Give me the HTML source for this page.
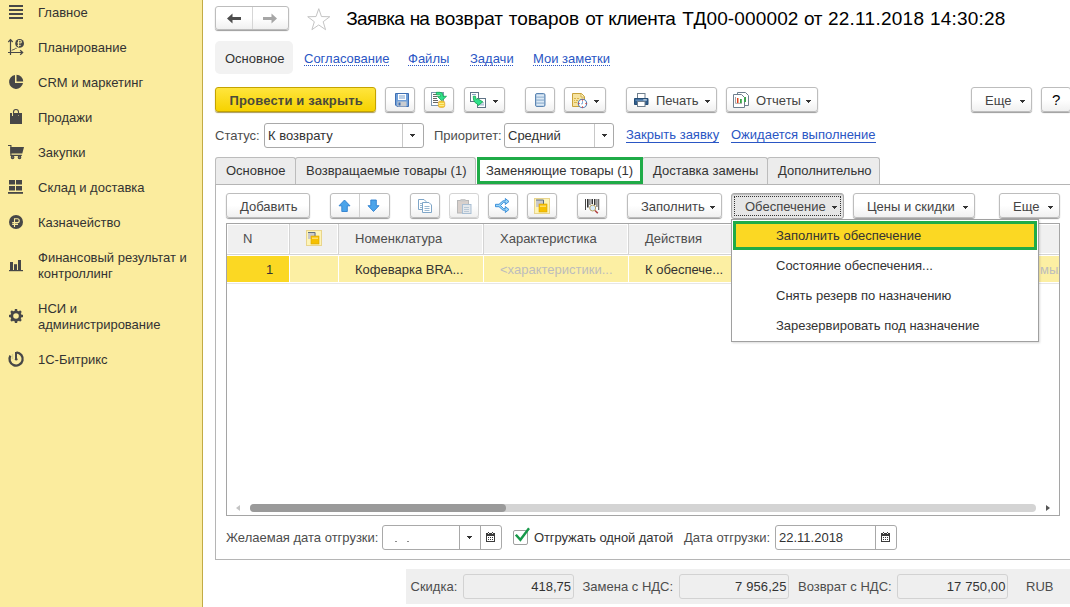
<!DOCTYPE html>
<html><head><meta charset="utf-8">
<style>
*{box-sizing:border-box;margin:0;padding:0}
html,body{width:1070px;height:607px;overflow:hidden;background:#fff;font-family:"Liberation Sans",sans-serif;font-size:13px;color:#333}
.a{position:absolute}
.t{position:absolute;white-space:nowrap;line-height:15px}
#side{left:0;top:0;width:203px;height:607px;background:#fbec9e;border-right:1px solid #c2ab45}
#side .t{color:#333;left:38px}
.ic{position:absolute}
.btn{position:absolute;border:1px solid #bdbdbd;border-radius:3px;background:linear-gradient(#fff 0%,#fff 50%,#f0f0f0 100%);box-shadow:0 1px 1px #9c9c9c}
.btn .t{color:#444}
.dd{position:absolute;width:0;height:0;border-left:3.5px solid transparent;border-right:3.5px solid transparent;border-top:4px solid #555}
.lnk{color:#2a56c4;text-decoration:none}
.lnkd,.lnku{position:relative;display:inline-block;line-height:15px}
.lnkd::after{content:'';position:absolute;left:0;right:0;bottom:0;height:1px;background:repeating-linear-gradient(90deg,#2a56c4 0 1px,transparent 1px 2px)}
.lnku::after{content:'';position:absolute;left:0;right:0;bottom:-1px;height:1px;background:#2a56c4}
.inp{position:absolute;border:1px solid #a9a9a9;border-radius:3px;background:#fff}
.tab{position:absolute;top:157px;height:27px;background:#ececec;border:1px solid #bcbcbc;border-bottom:none;border-radius:3px 3px 0 0}
.lbl{color:#4d4d4d}
.arr{position:absolute;width:5px;height:3px;background:linear-gradient(#333,#333) 0 0/5px 1px no-repeat,linear-gradient(#333,#333) 1px 1px/3px 1px no-repeat,linear-gradient(#333,#333) 2px 2px/1px 1px no-repeat}
.tw{font-size:19px;line-height:22px;color:#000}
</style></head><body>
<!-- Sidebar -->
<div id="side" class="a">
  <div class="t" style="top:5px">Главное</div>
  <div class="t" style="top:40px">Планирование</div>
  <div class="t" style="top:75px">CRM и маркетинг</div>
  <div class="t" style="top:110px">Продажи</div>
  <div class="t" style="top:145px">Закупки</div>
  <div class="t" style="top:180px">Склад и доставка</div>
  <div class="t" style="top:215px">Казначейство</div>
  <div class="t" style="top:250px;line-height:16px">Финансовый результат и<br>контроллинг</div>
  <div class="t" style="top:301px;line-height:16px">НСИ и<br>администрирование</div>
  <div class="t" style="top:352px">1С-Битрикс</div>
  <svg class="ic" style="left:0;top:0" width="30" height="380" viewBox="0 0 30 380">
    <g fill="#474747">
      <!-- hamburger -->
      <rect x="9" y="5" width="14" height="2"/><rect x="9" y="9" width="14" height="2"/><rect x="9" y="13" width="14" height="2"/><rect x="9" y="17" width="14" height="2"/>
      <!-- planning -->
      <path d="M10.5 39.5 V55 M8 52.5 H23" stroke="#474747" stroke-width="1.2" fill="none"/>
      <path d="M8.3 42 L10.5 39.6 L12.7 42 M20.2 50.3 L22.6 52.5 L20.2 54.7" stroke="#474747" stroke-width="1.3" fill="none"/>
      <path d="M11.6 50.6 L13 49.6 H14 L15.4 48.4 H16.6" stroke="#474747" stroke-width="0.9" fill="none"/>
      <circle cx="19.6" cy="43.4" r="4.4"/>
      <path d="M18.5 40.2 V46.8 M18.5 40.7 H21.2 V42.9 H17.2 M17.2 45.3 H20.7" stroke="#fbec9e" stroke-width="1" fill="none"/>
      <!-- pie -->
      <path d="M15 75 A7 7 0 1 0 23 83 L15 83 Z"/>
      <path d="M16.5 74.8 A6.8 6.8 0 0 1 23.2 81.5 L16.5 81.5 Z"/>
      <!-- bag -->
      <path d="M10 113 H12 V116 H13 V113 H18 V116 H19 V113 H22 V124 H10 Z"/>
      <path d="M13.5 115.5 V112 A2.5 2.5 0 0 1 18.5 112 V115.5" stroke="#474747" stroke-width="1.1" fill="none"/>
      <!-- cart -->
      <path d="M8 145.5 H10.9 V155.4 H21.8" stroke="#474747" stroke-width="1.15" fill="none"/>
      <path d="M10.3 147 H24 L22.3 153.6 H10.3 Z"/>
      <circle cx="12.6" cy="157.3" r="1.3" stroke="#474747" stroke-width="1.1" fill="#7a7560"/><circle cx="19.5" cy="157.3" r="1.3" stroke="#474747" stroke-width="1.1" fill="#7a7560"/>
      <!-- grid -->
      <rect x="9" y="180" width="6" height="4.5"/><rect x="16" y="180" width="6" height="4.5"/>
      <rect x="9" y="186" width="6" height="4.5"/><rect x="16" y="186" width="6" height="4.5"/>
      <rect x="8" y="192" width="15" height="1.8"/>
      <!-- ruble -->
      <circle cx="16" cy="222" r="7"/>
      <path d="M14.5 218.2 V227 M14.5 218.7 H17.3 A1.95 1.95 0 0 1 17.3 222.6 H12.2 M12.2 224.4 H18" stroke="#fbec9e" stroke-width="1.1" fill="none"/>
      <!-- bars -->
      <rect x="10" y="262" width="3" height="8.5"/><rect x="14" y="264.2" width="3" height="6.3"/><rect x="18" y="260" width="3" height="10.5"/>
      <rect x="9" y="270" width="14" height="1.2"/>
      <!-- gear -->
      <g transform="translate(16,316)">
        <circle r="5.6"/>
        <rect x="-1.2" y="-7" width="2.4" height="14"/><rect x="-7" y="-1.2" width="14" height="2.4"/>
        <rect x="-1.2" y="-7" width="2.4" height="14" transform="rotate(45)"/><rect x="-1.2" y="-7" width="2.4" height="14" transform="rotate(-45)"/>
        <circle r="2.8" fill="#fbec9e"/>
      </g>
      <!-- bitrix -->
      <path d="M16.5 352.4 A6.6 6.6 0 1 1 10.4 355.6" stroke="#474747" stroke-width="2.3" fill="none"/>
      <rect x="15" y="352" width="2" height="7.5"/>
      <circle cx="16.2" cy="359.2" r="1.3"/>
      <path d="M12.5 354 V359" stroke="#d8d28a" stroke-width="1.5"/>
    </g>
  </svg>
</div>

<!-- Header -->
<div class="btn" style="left:215px;top:6px;width:74px;height:24px"></div>
<div class="a" style="left:252px;top:7px;width:1px;height:22px;background:#d6d6d6"></div>
<svg class="a" style="left:215px;top:6px" width="74" height="24">
  <path d="M12 12.5 L17.5 7.5 V11 H26 V14 H17.5 V17.5 Z" fill="#4d4d4d"/>
  <path d="M62 12.5 L56.5 7.5 V11 H48 V14 H56.5 V17.5 Z" fill="#a6a6a6"/>
</svg>
<svg class="a" style="left:300px;top:0px" width="40" height="40"><path d="M18.75 8.70 L21.48 16.55 L29.78 16.72 L23.16 21.73 L25.57 29.68 L18.75 24.94 L11.93 29.68 L14.34 21.73 L7.72 16.72 L16.02 16.55 Z" fill="none" stroke="#c4c4c4" stroke-width="1" stroke-linejoin="miter"/></svg>
<div class="t tw" style="left:346.2px;letter-spacing:-0.6px;top:8px">Заявка</div><div class="t tw" style="left:409.8px;letter-spacing:-1px;top:8px">на</div><div class="t tw" style="left:434.8px;letter-spacing:-0.05px;top:8px">возврат</div><div class="t tw" style="left:508.8px;letter-spacing:-0.07px;top:8px">товаров</div><div class="t tw" style="left:585.2px;letter-spacing:-0.4px;top:8px">от</div><div class="t tw" style="left:608.2px;letter-spacing:-0.45px;top:8px">клиента</div><div class="t tw" style="left:682.3px;letter-spacing:0.14px;top:8px">ТД00-000002</div><div class="t tw" style="left:804px;letter-spacing:-0.3px;top:8px">от</div><div class="t tw" style="left:827.9px;letter-spacing:0.27px;top:8px">22.11.2018</div><div class="t tw" style="left:930.1px;letter-spacing:0.17px;top:8px">14:30:28</div>

<div class="a" style="left:215px;top:41px;width:78px;height:33px;background:#f2f2f2;border-radius:5px"></div>
<div class="t" style="left:225px;top:51px;color:#333">Основное</div>
<div class="t lnk" style="left:304px;top:51px"><span class="lnkd">Согласование</span></div>
<div class="t lnk" style="left:408px;top:51px"><span class="lnkd">Файлы</span></div>
<div class="t lnk" style="left:470px;top:51px"><span class="lnkd">Задачи</span></div>
<div class="t lnk" style="left:533px;top:51px"><span class="lnkd">Мои заметки</span></div>


<!-- main toolbar -->
<div class="a" style="left:215px;top:87px;width:161px;height:25px;border:1px solid #c4a300;border-radius:3px;background:linear-gradient(#ffe53d,#f6d200);box-shadow:0 1px 1px #a89a5a"></div>
<div class="t" style="left:229.5px;top:93px;font-weight:bold;color:#4a4a3a;letter-spacing:0.17px">Провести и закрыть</div>
<div class="btn" style="left:385px;top:87px;width:30px;height:25px"></div>
<div class="btn" style="left:424px;top:87px;width:30px;height:25px"></div>
<div class="btn" style="left:464px;top:87px;width:41px;height:25px"></div>
<div class="btn" style="left:525px;top:87px;width:30px;height:25px"></div>
<div class="btn" style="left:564px;top:87px;width:42px;height:25px"></div>
<div class="btn" style="left:626px;top:87px;width:91px;height:25px"></div>
<div class="t" style="left:656px;top:93px;color:#444">Печать</div>
<div class="btn" style="left:726px;top:87px;width:92px;height:25px"></div>
<div class="t" style="left:756px;top:93px;color:#444">Отчеты</div>
<div class="btn" style="left:971px;top:87px;width:61px;height:25px"></div>
<div class="t" style="left:985px;top:93px;color:#444">Еще</div>
<div class="btn" style="left:1041px;top:87px;width:30px;height:25px"></div>
<div class="t" style="left:1052px;top:92px;color:#000;font-size:15px">?</div>
<svg class="a" style="left:380px;top:85px" width="460" height="30" viewBox="380 85 460 30">
  <!-- floppy -->
  <path d="M395.5 93.5 H408.5 V106.5 H397 L395.5 105 Z" fill="#6f9fd9" stroke="#3f6fb2" stroke-width="1"/>
  <rect x="398" y="94" width="8" height="6" fill="#fff"/>
  <rect x="399" y="95.5" width="6" height="1" fill="#7aa0cc"/><rect x="399" y="97.5" width="6" height="1" fill="#7aa0cc"/>
  <rect x="397.5" y="101.5" width="9" height="5" fill="#c9ccd0"/>
  <rect x="398.5" y="102.5" width="2" height="3" fill="#3f6fb2"/>
  <!-- doc + arrow + coins -->
  <rect x="431.5" y="92.5" width="12" height="13" fill="#fff" stroke="#7d97b0" stroke-width="1"/>
  <g fill="#666"><rect x="433" y="94" width="4" height="1"/><rect x="433" y="96" width="4" height="1"/><rect x="433" y="98" width="4" height="1"/><rect x="433" y="100" width="5" height="1"/><rect x="433" y="102" width="5" height="1"/></g>
  <path d="M436.3 92.3 H440 Q443 92.3 443 95.5 V96.3 H446.5 L441.8 100.8 L437.3 96.3 H440.5 V95.7 Q440.5 94.8 439.5 94.8 H436.3 Z" fill="#2fe08a" stroke="#17a34f" stroke-width="0.8"/>
  <rect x="438.3" y="101" width="6.5" height="6.5" rx="2" fill="#f3cf3a" stroke="#e0a030" stroke-width="0.6"/>
  <rect x="439" y="103" width="5" height="0.8" fill="#fff3a0"/><rect x="439" y="105" width="5" height="0.8" fill="#fff3a0"/>
  <!-- docs + green -->
  <rect x="470.5" y="92.5" width="8" height="9" fill="#fff" stroke="#5f7386" stroke-width="1"/>
  <rect x="477.5" y="98.5" width="8" height="9" fill="#fff" stroke="#5f7386" stroke-width="1"/>
  <rect x="472" y="94" width="4" height="0.8" fill="#6c8fb5"/>
  <g fill="#6c8fb5"><rect x="479" y="102.5" width="5" height="0.8"/><rect x="479" y="104.5" width="5" height="0.8"/></g>
  <path d="M473.2 96.3 L475.5 96.2 L476 99.5 L477.5 98.6 L482.8 101.8 L478 105.7 L477.5 104.2 L475 102.5 Q473 100.5 473.2 96.3 Z" fill="#2fe08a" stroke="#17a34f" stroke-width="0.8"/>
  
  <!-- list -->
  <rect x="535.5" y="93.5" width="9.5" height="13" rx="1.5" fill="#9db9d6" stroke="#5d86b3" stroke-width="1"/>
  <g fill="#dbe9f5"><rect x="536.5" y="94.5" width="7.5" height="2"/><rect x="536.5" y="97.8" width="7.5" height="1.6"/><rect x="536.5" y="100.8" width="7.5" height="1.6"/><rect x="536.5" y="103.8" width="7.5" height="1.8"/></g>
  <!-- doc clock -->
  <path d="M572.5 93.5 H581.5 L584.5 96.5 V106.5 H572.5 Z" fill="#f6e3a0" stroke="#c8a23a" stroke-width="1"/>
  <path d="M581 93.8 V97 H584.3" fill="#fff8d0" stroke="#c8a23a" stroke-width="0.8"/>
  <g fill="#d9b54a"><rect x="574" y="98" width="2" height="1"/><rect x="577" y="98" width="2" height="1"/><rect x="574" y="100" width="1" height="1"/><rect x="576" y="100" width="2" height="1"/><rect x="574" y="102" width="3" height="1"/></g>
  <circle cx="582.5" cy="103.5" r="4.2" fill="#fff" stroke="#4b7db5" stroke-width="1.1"/>
  <path d="M582.5 101 V103.8 H581" stroke="#6a9ad0" stroke-width="0.8" fill="none"/>
  <g fill="#e0302a"><circle cx="582.5" cy="100" r="0.7"/><circle cx="582.5" cy="107" r="0.7"/><circle cx="579" cy="103.5" r="0.7"/><circle cx="586" cy="103.5" r="0.7"/></g>
  
  <!-- printer -->
  <rect x="637.5" y="93.5" width="7.5" height="5" fill="#fff" stroke="#6f7f8e" stroke-width="1"/>
  <path d="M634.5 98.5 H648 V104.5 H634.5 Z" fill="#2f5d8c" stroke="#264d75" stroke-width="1" stroke-linejoin="round"/>
  <rect x="635.5" y="99.5" width="11.5" height="1.5" fill="#5d88b5"/>
  <rect x="643.5" y="99.2" width="1.2" height="1.2" fill="#fff"/><rect x="645.3" y="99.2" width="1.2" height="1.2" fill="#fff"/>
  <rect x="637.5" y="101.5" width="7.5" height="5" fill="#fff" stroke="#6f7f8e" stroke-width="1"/>
  
  <!-- reports -->
  <path d="M737.5 92.5 H745.5 L748.5 95.5 V105.5 H737.5 Z" fill="#fff" stroke="#6f7f8e" stroke-width="1"/>
  <path d="M733.5 94.5 H741.5 L744.5 97.5 V107.5 H733.5 Z" fill="#fff" stroke="#6f7f8e" stroke-width="1"/>
  <rect x="744.2" y="97" width="1.8" height="5" fill="#3aa54a"/>
  <path d="M735.5 97 V103.3 H742" stroke="#666" stroke-width="0.6" fill="none"/>
  <rect x="737" y="98" width="1.4" height="5" fill="#e23a22"/><rect x="738.4" y="98" width="0.6" height="5" fill="#f5b070"/>
  <rect x="740" y="99" width="1.8" height="4" fill="#3aa54a"/>
  
  
</svg>


<!-- status row -->
<div class="t lbl" style="left:215px;top:128px">Статус:</div>
<div class="inp" style="left:264px;top:123px;width:160px;height:25px"></div>
<div class="a" style="left:402px;top:124px;width:1px;height:23px;background:#c8c8c8"></div>
<div class="t" style="left:268px;top:128px">К возврату</div>
<div class="t lbl" style="left:434px;top:128px">Приоритет:</div>
<div class="inp" style="left:504px;top:123px;width:110px;height:25px"></div>
<div class="a" style="left:594px;top:124px;width:1px;height:23px;background:#c8c8c8"></div>
<div class="t" style="left:508px;top:128px">Средний</div>

<div class="t lnk" style="left:626px;top:127px"><span class="lnku">Закрыть заявку</span></div>
<div class="t lnk" style="left:731px;top:127px"><span class="lnku">Ожидается выполнение</span></div>

<!-- tabs -->
<div class="a" style="left:215px;top:184px;width:855px;height:376px;border:1px solid #b5b5b5;border-right:none"></div>
<div class="tab" style="left:215px;width:81px"></div>
<div class="t" style="left:226px;top:163px">Основное</div>
<div class="tab" style="left:295px;width:181px"></div>
<div class="t" style="left:306px;top:163px">Возвращаемые товары (1)</div>
<div class="tab" style="left:642px;width:126px"></div>
<div class="t" style="left:653px;top:163px">Доставка замены</div>
<div class="tab" style="left:767px;width:113px"></div>
<div class="t" style="left:778px;top:163px">Дополнительно</div>
<div class="a" style="left:477px;top:157px;width:166px;height:27px;background:#fff;border:3px solid #1fab47"></div>
<div class="t" style="left:486px;top:163px">Заменяющие товары (1)</div>




<!-- table toolbar -->
<div class="btn" style="left:226px;top:193px;width:84px;height:25px"></div>
<div class="t" style="left:240px;top:199px;color:#444">Добавить</div>
<div class="btn" style="left:330px;top:193px;width:60px;height:25px"></div>
<div class="a" style="left:359px;top:194px;width:1px;height:23px;background:#d0d0d0"></div>
<div class="btn" style="left:410px;top:193px;width:30px;height:25px"></div>
<div class="btn" style="left:449px;top:193px;width:30px;height:25px;border-color:#d4d4d4;box-shadow:0 1px 0 #c8c8c8"></div>
<div class="btn" style="left:488px;top:193px;width:30px;height:25px"></div>
<div class="btn" style="left:527px;top:193px;width:30px;height:25px"></div>
<div class="btn" style="left:577px;top:193px;width:30px;height:25px"></div>
<div class="btn" style="left:627px;top:193px;width:95px;height:25px"></div>
<div class="t" style="left:641px;top:199px;color:#444">Заполнить</div>
<div class="a" style="left:731px;top:193px;width:113px;height:26px;border:1px solid #a8a8a8;border-radius:3px;background:#e6e6e6;box-shadow:inset 0 1px 1px #bbb"></div>
<div class="a" style="left:734px;top:196px;width:107px;height:20px;border:1px dotted #333"></div>
<div class="t" style="left:745px;top:199px;color:#444">Обеспечение</div>
<div class="btn" style="left:853px;top:193px;width:122px;height:25px"></div>
<div class="t" style="left:867px;top:199px;color:#444">Цены и скидки</div>
<div class="btn" style="left:999px;top:193px;width:61px;height:25px"></div>
<div class="t" style="left:1013px;top:199px;color:#444">Еще</div>
<svg class="a" style="left:330px;top:190px" width="740" height="60" viewBox="330 190 740 60">
  <!-- up -->
  <path d="M344.5 200 L350 205.8 H347.3 V211.5 H341.8 V205.8 H339 Z" fill="#4ba4ea" stroke="#2d7fcf" stroke-width="0.9" stroke-linejoin="round"/>
  <!-- down -->
  <path d="M373.5 211.5 L379 205.7 H376.3 V200 H370.8 V205.7 H368 Z" fill="#4ba4ea" stroke="#2d7fcf" stroke-width="0.9" stroke-linejoin="round"/>
  <!-- copy -->
  <path d="M418.5 199.5 H424 L426 201.5 V209.5 H418.5 Z" fill="#fff" stroke="#7fa6c8" stroke-width="1"/>
  <path d="M422.5 202.5 H429 L431.5 205 V212.5 H422.5 Z" fill="#fff" stroke="#7fa6c8" stroke-width="1"/>
  <g fill="#8fb0cc"><rect x="420" y="203" width="2" height="0.9"/><rect x="420" y="205" width="2" height="0.9"/><rect x="420" y="207" width="2" height="0.9"/>
  <rect x="424.5" y="206" width="5" height="0.9"/><rect x="424.5" y="208" width="5" height="0.9"/><rect x="424.5" y="210" width="5" height="0.9"/></g>
  <!-- paste disabled -->
  <rect x="457.5" y="200.5" width="11" height="12.5" fill="#d8d0cc" stroke="#b8b8b8" stroke-width="1"/>
  <rect x="460.5" y="199" width="5" height="2.5" fill="#c8c8c8"/>
  <rect x="462.5" y="204.5" width="8.5" height="9" fill="#e4e8ec" stroke="#a9bfd4" stroke-width="1"/>
  <g fill="#b4c4d4"><rect x="464" y="207" width="5" height="0.9"/><rect x="464" y="209" width="5" height="0.9"/><rect x="464" y="211" width="5" height="0.9"/></g>
  <!-- split -->
  <path d="M495.5 204.3 H499 L503 200.8 H505.3 V198.5 L509 201.5 L505.3 204.5 V202.3 H503.6 L500.5 205.5 L503.6 208.6 H505.3 V206.5 L509 209.5 L505.3 212.5 V210.2 H503 L499 206.7 H495.5 Z" fill="#9ad6f7" stroke="#2c86d6" stroke-width="0.9" stroke-linejoin="round"/>
  <!-- yellow frame icon -->
  <rect x="534.5" y="198.5" width="15" height="15" fill="#fdf4b8" stroke="#e9d58c" stroke-width="1"/>
  <rect x="536" y="200" width="7.5" height="7" fill="#c9c9cc"/>
  <path d="M536 200 H543.5 V204" stroke="#5e6f80" stroke-width="1" fill="none"/>
  <rect x="539" y="204" width="8" height="8" fill="#f6c000" stroke="#d9a300" stroke-width="0.6"/>
  <rect x="540" y="205.5" width="6" height="1.5" fill="#ffdd66"/>
  <!-- barcode -->
  <g fill="#333"><rect x="585" y="199" width="0.9" height="11"/><rect x="587" y="199" width="1.6" height="8.5"/><rect x="589.5" y="199" width="0.9" height="6"/><rect x="591.5" y="199" width="1.5" height="5"/><rect x="594" y="199" width="1.5" height="6"/><rect x="596.5" y="199" width="0.9" height="8"/><rect x="598.3" y="199" width="0.9" height="11"/></g>
  <path d="M595 210.5 L597.8 213.3" stroke="#b04040" stroke-width="1.6"/>
  <circle cx="592.7" cy="208" r="3" fill="#d6eaf8" stroke="#b8a060" stroke-width="1"/>
  <!-- dropdown arrows -->
  
  
  
  
</svg>

<!-- table -->
<div class="a" style="left:226px;top:223px;width:834px;height:293px;border:1px solid #a5a5a5;background:#fff"></div>
<div class="a" style="left:228px;top:225px;width:60px;height:28px;background:#f0f0f0"></div>
<div class="a" style="left:290px;top:225px;width:47px;height:28px;background:#f0f0f0"></div>
<div class="a" style="left:339px;top:225px;width:143px;height:28px;background:#f0f0f0"></div>
<div class="a" style="left:484px;top:225px;width:143px;height:28px;background:#f0f0f0"></div>
<div class="a" style="left:629px;top:225px;width:430px;height:28px;background:#f0f0f0"></div>
<div class="a" style="left:227px;top:254px;width:832px;height:1px;background:#d4d4d4"></div>
<div class="a" style="left:289px;top:224px;width:1px;height:31px;background:#d4d4d4"></div>
<div class="a" style="left:338px;top:224px;width:1px;height:31px;background:#d4d4d4"></div>
<div class="a" style="left:483px;top:224px;width:1px;height:31px;background:#d4d4d4"></div>
<div class="a" style="left:628px;top:224px;width:1px;height:31px;background:#d4d4d4"></div>
<div class="t" style="left:243px;top:231px;color:#4d4d4d">N</div>
<div class="t" style="left:355px;top:231px;color:#4d4d4d">Номенклатура</div>
<div class="t" style="left:500px;top:231px;color:#4d4d4d">Характеристика</div>
<div class="t" style="left:645px;top:231px;color:#4d4d4d">Действия</div>
<svg class="a" style="left:304px;top:228px" width="20" height="20" viewBox="304 228 20 20">
  <g transform="translate(-228 32)">
  <rect x="534.5" y="198.5" width="15" height="15" fill="#fdf4b8" stroke="#e9d58c" stroke-width="1"/>
  <rect x="536" y="200" width="7.5" height="7" fill="#c9c9cc"/>
  <path d="M536 200.5 H543 V204" stroke="#5e6f80" stroke-width="1" fill="none"/>
  <rect x="539" y="204" width="8" height="8" fill="#f6c000" stroke="#d9a300" stroke-width="0.6"/>
  <rect x="540" y="205.5" width="6" height="1.5" fill="#ffdd66"/>
  </g>
</svg>
<div class="a" style="left:227px;top:256px;width:832px;height:26px;background:#fcefa3"></div>
<div class="a" style="left:227px;top:256px;width:62px;height:26px;background:#fbd823"></div>
<div class="a" style="left:289px;top:256px;width:1px;height:26px;background:#fff"></div>
<div class="a" style="left:338px;top:256px;width:1px;height:26px;background:#fff"></div>
<div class="a" style="left:483px;top:256px;width:1px;height:26px;background:#fff"></div>
<div class="a" style="left:628px;top:256px;width:1px;height:26px;background:#fff"></div>
<div class="a" style="left:227px;top:283px;width:832px;height:1px;background:#e6e6e6"></div>
<div class="t" style="left:266px;top:262px;color:#333">1</div>
<div class="t" style="left:355px;top:262px;color:#333">Кофеварка BRA...</div>
<div class="t" style="left:500px;top:262px;color:#bdbdbd">&lt;характеристики...</div>
<div class="t" style="left:645px;top:262px;color:#333">К обеспече...</div>
<div class="a" style="left:1040px;top:256px;width:19px;height:26px;overflow:hidden"><div class="t" style="left:0;top:6px;color:#bdbdbd">мых</div></div>
<!-- scrollbar -->
<div class="a" style="left:250px;top:504px;width:786px;height:8px;border-radius:4px;background:#d4d4d4"></div>
<div class="a" style="left:250px;top:504px;width:256px;height:8px;border-radius:4px;background:#9a9a9a"></div>
<div class="a" style="left:236px;top:505px;width:0;height:0;border-top:3px solid transparent;border-bottom:3px solid transparent;border-right:4px solid #c4c4c4"></div>
<div class="a" style="left:1046px;top:505px;width:0;height:0;border-top:3px solid transparent;border-bottom:3px solid transparent;border-left:4px solid #555"></div>

<!-- date row -->
<div class="t lbl" style="left:226px;top:530px">Желаемая дата отгрузки:</div>
<div class="inp" style="left:382px;top:525px;width:120px;height:25px"></div>
<div class="a" style="left:459px;top:526px;width:1px;height:23px;background:#a8a8a8"></div>
<div class="a" style="left:480px;top:526px;width:1px;height:23px;background:#a8a8a8"></div>
<div class="a" style="left:395px;top:541px;width:2px;height:1px;background:#8a8a8a"></div><div class="a" style="left:407px;top:541px;width:2px;height:1px;background:#8a8a8a"></div>
<div class="a" style="left:513px;top:530px;width:15px;height:15px;border:1px solid #a0a0a0;border-radius:2px;background:#fff"></div>
<div class="t" style="left:534px;top:530px;color:#333;letter-spacing:-0.1px">Отгружать одной датой</div>
<div class="t lbl" style="left:684px;top:530px">Дата отгрузки:</div>
<div class="inp" style="left:775px;top:525px;width:122px;height:25px"></div>
<div class="a" style="left:875px;top:526px;width:1px;height:23px;background:#a8a8a8"></div>
<div class="t" style="left:779px;top:530px;color:#333">22.11.2018</div>
<svg class="a" style="left:460px;top:520px" width="440" height="30" viewBox="460 520 440 30">
  
  <g shape-rendering="crispEdges">
  <rect x="486" y="533" width="9" height="9" fill="#3c3c3c"/>
  <rect x="487" y="536" width="7" height="5" fill="#fff"/>
  <rect x="488" y="532" width="1" height="1" fill="#3c3c3c"/><rect x="492" y="532" width="1" height="1" fill="#3c3c3c"/>
  <rect x="488" y="533" width="1" height="1" fill="#eee"/><rect x="492" y="533" width="1" height="1" fill="#eee"/>
  <g fill="#3c3c3c"><rect x="488" y="537" width="1" height="1"/><rect x="490" y="537" width="1" height="1"/><rect x="492" y="537" width="1" height="1"/><rect x="488" y="539" width="1" height="1"/><rect x="490" y="539" width="1" height="1"/><rect x="492" y="539" width="1" height="1"/></g>
  </g>
  <g transform="translate(395 0)" shape-rendering="crispEdges">
  <rect x="486" y="533" width="9" height="9" fill="#3c3c3c"/>
  <rect x="487" y="536" width="7" height="5" fill="#fff"/>
  <rect x="488" y="532" width="1" height="1" fill="#3c3c3c"/><rect x="492" y="532" width="1" height="1" fill="#3c3c3c"/>
  <rect x="488" y="533" width="1" height="1" fill="#eee"/><rect x="492" y="533" width="1" height="1" fill="#eee"/>
  <g fill="#3c3c3c"><rect x="488" y="537" width="1" height="1"/><rect x="490" y="537" width="1" height="1"/><rect x="492" y="537" width="1" height="1"/><rect x="488" y="539" width="1" height="1"/><rect x="490" y="539" width="1" height="1"/><rect x="492" y="539" width="1" height="1"/></g>
  </g>

  <path d="M516.6 535.6 L520.4 539.8 L528.3 529.3" stroke="#17994a" stroke-width="2.4" fill="none" stroke-linecap="square"/>
</svg>

<!-- footer -->
<div class="a" style="left:406px;top:569px;width:664px;height:35px;background:#efefef"></div>
<div class="t lbl" style="left:410.5px;top:579px">Скидка:</div>
<div class="a" style="left:463px;top:574px;width:111px;height:25px;border:1px solid #d2d2d2;border-radius:3px;background:#efefef"></div>
<div class="t" style="left:521px;top:579px;width:50px;text-align:right;color:#333">418,75</div>
<div class="t lbl" style="left:582.5px;top:579px">Замена с НДС:</div>
<div class="a" style="left:679px;top:574px;width:110px;height:25px;border:1px solid #d2d2d2;border-radius:3px;background:#efefef"></div>
<div class="t" style="left:701.5px;top:579px;width:85px;text-align:right;color:#333;letter-spacing:0.1px">7 956,25</div>
<div class="t lbl" style="left:798px;top:579px">Возврат с НДС:</div>
<div class="a" style="left:897px;top:574px;width:111px;height:25px;border:1px solid #d2d2d2;border-radius:3px;background:#efefef"></div>
<div class="t" style="left:921.5px;top:579px;width:84px;text-align:right;color:#333;letter-spacing:0.1px">17 750,00</div>
<div class="t lbl" style="left:1026px;top:579px">RUB</div>

<div class="arr" style="left:493px;top:100px"></div><div class="arr" style="left:594px;top:100px"></div><div class="arr" style="left:705px;top:100px"></div><div class="arr" style="left:806px;top:100px"></div><div class="arr" style="left:1020px;top:100px"></div><div class="arr" style="left:710px;top:206px"></div><div class="arr" style="left:832px;top:206px"></div><div class="arr" style="left:963px;top:206px"></div><div class="arr" style="left:1048px;top:206px"></div><div class="arr" style="left:410px;top:134px"></div><div class="arr" style="left:602px;top:134px"></div><div class="arr" style="left:467px;top:536px"></div>
<!-- dropdown menu -->
<div class="a" style="left:731px;top:219px;width:308px;height:123px;border:1px solid #a0a0a0;background:#fff;box-shadow:1px 1px 2px rgba(0,0,0,.15)"></div>
<div class="a" style="left:733px;top:221px;width:304px;height:29px;background:#fbd823;border:3px solid #1fab47"></div>
<div class="t" style="left:776px;top:228px;color:#333">Заполнить обеспечение</div>
<div class="t" style="left:776px;top:258px;color:#333">Состояние обеспечения...</div>
<div class="t" style="left:776px;top:288px;color:#333">Снять резерв по назначению</div>
<div class="t" style="left:776px;top:318px;color:#333">Зарезервировать под назначение</div>
</body></html>
